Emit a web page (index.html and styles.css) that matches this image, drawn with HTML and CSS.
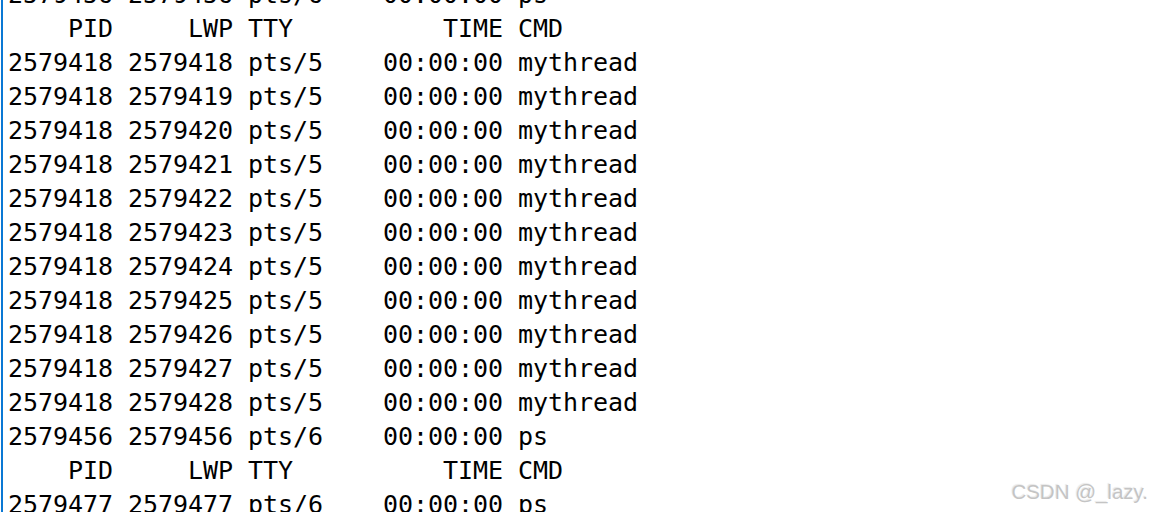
FILE: index.html
```html
<!DOCTYPE html>
<html>
<head>
<meta charset="utf-8">
<link rel="stylesheet" href="styles.css">
</head>
<body>
<div class="term">
<pre class="out">2579456 2579456 pts/6    00:00:00 ps
    PID     LWP TTY          TIME CMD
2579418 2579418 pts/5    00:00:00 mythread
2579418 2579419 pts/5    00:00:00 mythread
2579418 2579420 pts/5    00:00:00 mythread
2579418 2579421 pts/5    00:00:00 mythread
2579418 2579422 pts/5    00:00:00 mythread
2579418 2579423 pts/5    00:00:00 mythread
2579418 2579424 pts/5    00:00:00 mythread
2579418 2579425 pts/5    00:00:00 mythread
2579418 2579426 pts/5    00:00:00 mythread
2579418 2579427 pts/5    00:00:00 mythread
2579418 2579428 pts/5    00:00:00 mythread
2579456 2579456 pts/6    00:00:00 ps
    PID     LWP TTY          TIME CMD
2579477 2579477 pts/6    00:00:00 ps</pre>
<div class="mark">CSDN @_lazy.</div>
</div>
</body>
</html>
```

FILE: styles.css
```css
html, body {
  margin: 0;
  padding: 0;
  background: #ffffff;
  overflow: hidden;
}
.term {
  position: relative;
  width: 1150px;
  height: 512px;
  margin-left: 1px;
  border-left: 2px solid #0a78d4;
  padding-left: 5px;
  overflow: hidden;
  box-sizing: border-box;
}
.out {
  margin: -22px 0 0 0;
  font-family: "DejaVu Sans Mono", monospace;
  font-size: 25px;
  letter-spacing: -0.05px;
  line-height: 34px;
  color: #000000;
}
.mark {
  position: absolute;
  right: 3px;
  bottom: 8px;
  font-family: "Liberation Sans", Arial, sans-serif;
  font-size: 20.5px;
  color: #c4c4c4;
  text-shadow: 1px 1px 1px #ffffff, -1px -1px 1px #e8e8e8;
}
```
